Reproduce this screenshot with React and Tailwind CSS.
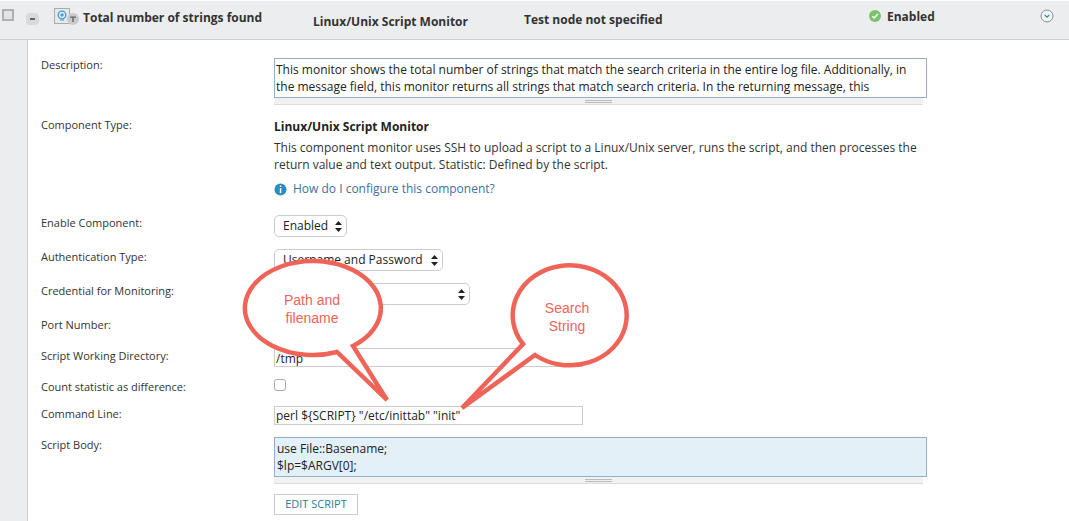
const Row = ({ label, className = "", labelClass = "", children }) => (
  <div className={`flex ${className}`}>
    <div className={`w-[233px] shrink-0 text-[11px] leading-[14px] text-[#333] ${labelClass}`}>{label}</div>
    <div className="min-w-0 flex-1">{children}</div>
  </div>
);

const Handle = () => (
  <div className="flex h-[7px] w-[649px] flex-col items-center justify-center gap-px border-b border-[#ddd] bg-[#f1f1f1]">
    <div className="h-px w-[27px] bg-[#bbb]" />
    <div className="h-px w-[27px] bg-[#bbb]" />
  </div>
);

const Arrows = () => (
  <svg width="7" height="11" viewBox="0 0 7 11" className="shrink-0">
    <path d="M3.5 0 7 4H0zM3.5 11 0 7h7z" fill="#222" />
  </svg>
);

const Select = ({ className, children }) => (
  <div className={`flex h-[22px] items-center justify-between rounded-[5px] border border-[#ccc] bg-white pl-[8px] pr-[4px] text-[12px] text-[#222] ${className}`}>
    <span className="whitespace-nowrap">{children}</span>
    <Arrows />
  </div>
);

export default function App() {
  return (
    <div className="relative h-[521px] w-[1069px] overflow-hidden bg-white font-['Open_Sans',sans-serif]">
      <div className="mt-px flex h-[39px] items-start border-b border-[#cfd0d2] bg-[#ecedef] text-[12px] font-bold text-[#333]">
        <div className="ml-[2px] mt-[8px] h-[12px] w-[12px] border-2 border-[#b0b0b2] bg-[#e4e4e6]" />
        <div className="ml-[12px] mt-[12px] flex h-[12px] w-[13px] items-center justify-center rounded-[4px] bg-[#d9dadc]">
          <div className="h-[2px] w-[5px] bg-[#666]" />
        </div>
        <svg width="26" height="18" viewBox="0 0 26 18" className="ml-[15px] mt-[7px] shrink-0">
          <rect x="0.5" y="0.5" width="15" height="15" fill="#e7e8ea" stroke="#a9abad" />
          <circle cx="8" cy="7" r="3.8" fill="none" stroke="#3aa0d8" strokeWidth="1.3" />
          <path d="M8 5l2 2-2 2-2-2z" fill="#3aa0d8" />
          <path d="M6 12h4" stroke="#3aa0d8" strokeWidth="1" />
          <circle cx="19" cy="11" r="6" fill="#c9cacc" />
          <path d="M16 8.5h6v1.2h-2.3V14h-1.4V9.700H16z" fill="#666" />
        </svg>
        <div className="ml-[3px] mt-[8px] w-[230px] whitespace-nowrap">Total number of strings found</div>
        <div className="mt-[12px] w-[211px] whitespace-nowrap">Linux/Unix Script Monitor</div>
        <div className="mt-[10px] w-[345px] whitespace-nowrap">Test node not specified</div>
        <svg width="12" height="12" viewBox="0 0 12 12" className="mt-[9px] shrink-0">
          <circle cx="6" cy="6" r="6" fill="#7ac36a" />
          <path d="M3.2 6.2 5.2 8l3.600-4" fill="none" stroke="#fff" strokeWidth="1.5" />
        </svg>
        <div className="ml-[6px] mt-[7px] w-[153px]">Enabled</div>
        <svg width="14" height="14" viewBox="0 0 14 14" className="mt-[8px] shrink-0">
          <circle cx="7" cy="7" r="6" fill="#f1f2f4" stroke="#8b8d90" />
          <path d="M4.800 6 7 8.200 9.200 6" fill="none" stroke="#2b8cbe" strokeWidth="1.2" />
        </svg>
      </div>

      <div className="flex h-[481px]">
        <div className="w-[28px] shrink-0 border-r border-[#cfd0d2] bg-[#ecedef]" />
        <div className="flex-1 pl-[13px] pt-[18px]">
          <Row label="Description:">
            <div className="h-[40px] w-[653px] overflow-hidden border border-[#92aec9] px-[1px] pt-[2px] text-[12px] leading-[17px] text-[#222]">
              This monitor shows the total number of strings that match the search criteria in the entire log file. Additionally, in the message field, this monitor returns all strings that match search criteria. In the returning message, this
            </div>
            <Handle />
          </Row>
          <Row label="Component Type:" className="mt-[13px]">
            <div className="text-[12px] font-bold leading-[17px] text-[#222]">Linux/Unix Script Monitor</div>
            <p className="mt-[4px] w-[660px] text-[12px] leading-[17px] text-[#333]">
              This component monitor uses SSH to upload a script to a Linux/Unix server, runs the script, and then processes the return value and text output. Statistic: Defined by the script.
            </p>
            <div className="mt-[7px] flex items-center gap-[6px] text-[12px] leading-[18px] text-[#3c729f]">
              <svg width="13" height="13" viewBox="0 0 13 13">
                <circle cx="6.5" cy="6.5" r="6" fill="#2b8cbe" />
                <path d="M5.800 2.500h1.500V4H5.800zM5.800 5.300h1.500v5H5.800z" fill="#fff" />
              </svg>
              How do I configure this component?
            </div>
          </Row>
          <Row label="Enable Component:" className="mt-[17px]" labelClass="pt-px">
            <Select className="w-[73px]">Enabled</Select>
          </Row>
          <Row label="Authentication Type:" className="mt-[12px]" labelClass="pt-px">
            <Select className="w-[169px]">Username and Password</Select>
          </Row>
          <Row label="Credential for Monitoring:" className="mt-[12px]" labelClass="pt-px">
            <Select className="w-[196px]"> </Select>
          </Row>
          <Row label="Port Number:" className="mt-[12px] h-[20px]" labelClass="pt-px" />
          <Row label="Script Working Directory:" className="mt-[11px]" labelClass="pt-px">
            <div className="h-[19px] w-[309px] border border-[#ccc] pl-px text-[12px] leading-[19px] text-[#222]">/tmp</div>
          </Row>
          <Row label="Count statistic as difference:" className="mt-[12px]" labelClass="pt-px">
            <div className="h-[12px] w-[12px] rounded-[3px] border border-[#aaa] bg-white" />
          </Row>
          <Row label="Command Line:" className="mt-[12px]" labelClass="pt-px">
            <div className="h-[19px] w-[309px] border border-[#ccc] pl-px text-[12px] leading-[18px] text-[#222]">perl ${"{SCRIPT}"} "/etc/inittab" "init"</div>
          </Row>
          <Row label="Script Body:" className="mt-[12px]" labelClass="pt-px">
            <div className="h-[40px] w-[653px] border border-[#92aec9] bg-[#e3f0f8] px-[2px] pt-[2px] text-[12px] leading-[17px] text-[#222]">
              <div>use File::Basename;</div>
              <div>$lp=$ARGV[0];</div>
            </div>
            <Handle />
            <div className="mt-[10px] flex h-[21px] w-[84px] items-center justify-center border border-[#ccc] text-[11px] text-[#2e7a94]">EDIT SCRIPT</div>
          </Row>
        </div>
      </div>

      <svg width="1069" height="521" viewBox="0 0 1069 521" className="absolute left-0 top-0">
        <path d="M337 352 A68 47 0 1 1 353 346 L387 400 Z" fill="#fff" stroke="#ee6459" strokeWidth="4.5" strokeLinejoin="miter" />
        <path d="M535 355 A57 50 0 1 0 523 344 L462 408 Z" fill="#fff" stroke="#ee6459" strokeWidth="4.5" strokeLinejoin="miter" />
      </svg>
      <div className="absolute left-[262px] top-[291px] w-[100px] text-center font-['Liberation_Sans',sans-serif] text-[14px] leading-[18px] text-[#ee6459]">Path and<br />filename</div>
      <div className="absolute left-[517px] top-[299px] w-[100px] text-center font-['Liberation_Sans',sans-serif] text-[14px] leading-[18px] text-[#ee6459]">Search<br />String</div>
    </div>
  );
}
